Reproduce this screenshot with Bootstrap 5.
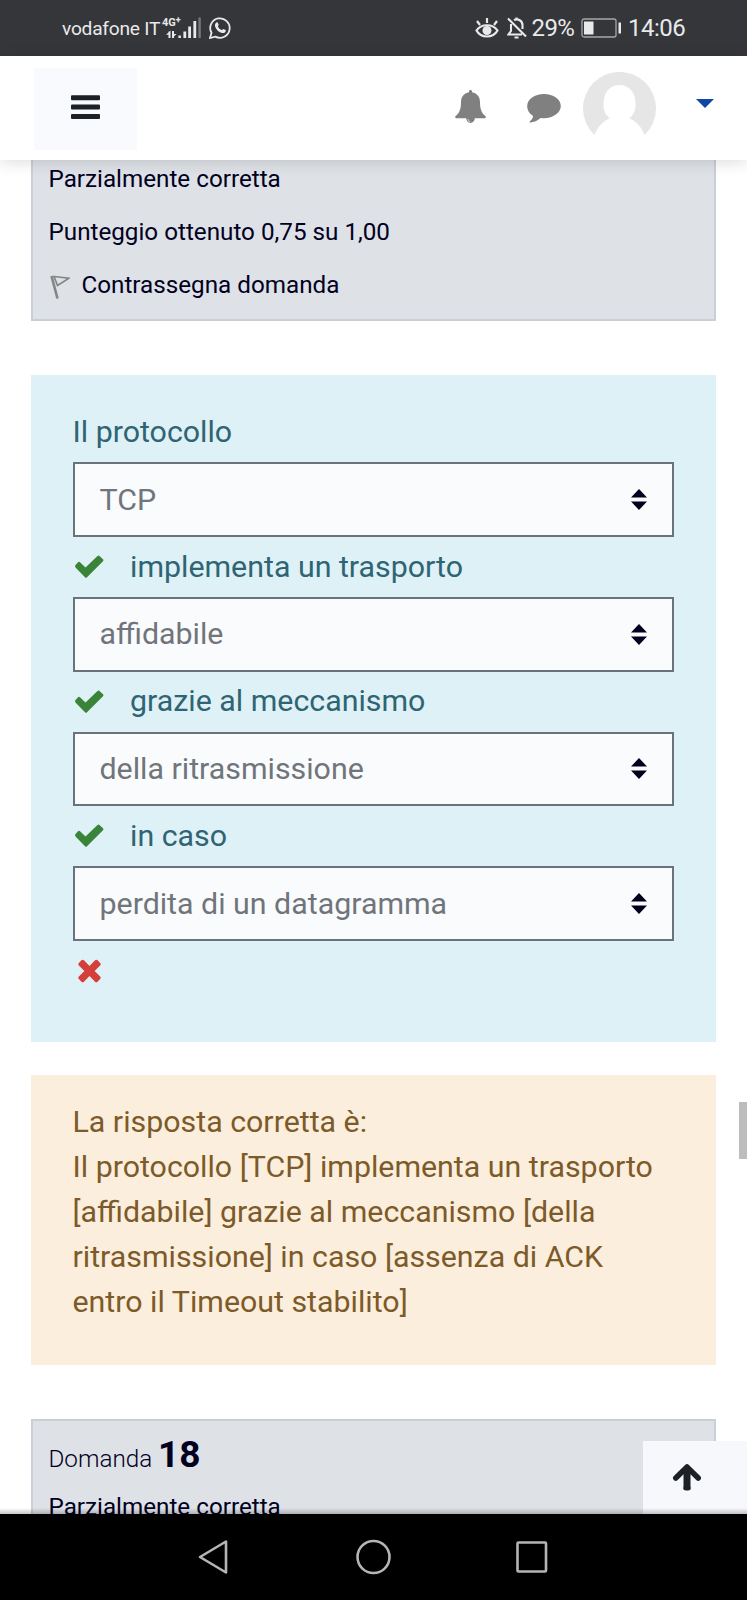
<!DOCTYPE html>
<html lang="it">
<head>
<meta charset="utf-8">
<meta name="viewport" content="width=device-width, initial-scale=1">
<title>Quiz - Domanda 17</title>
<link href="https://cdn.jsdelivr.net/npm/bootstrap@5.3.0/dist/css/bootstrap.min.css" rel="stylesheet">
<style>
body{font-family:Roboto,"Liberation Sans",sans-serif;font-size:30.35px;line-height:45px;color:#01001e}
svg{display:block;flex:none}
.screen{height:1600px;overflow:hidden}
.statusbar{height:56px;background:#35363a;color:#e9e9ea;padding:0 62px 0 62px;line-height:56px}
.carrier{font-size:19.2px;letter-spacing:-.25px;width:98px;white-space:nowrap;padding-top:1px}
.netcol{width:41px;height:28px}
.net-type{font:bold 11px/11px Roboto,sans-serif;left:2px;top:3px;white-space:nowrap}
.net-type span{font-size:9px;position:relative;top:-3px}
.pct{font-size:24px;width:49px;letter-spacing:-.6px}
.clock{font-size:24px;width:57px;letter-spacing:-.5px;white-space:nowrap}
.topbar{height:104px;background:#fff;box-shadow:0 3px 14px rgba(0,0,0,.13);z-index:2;padding:11.5px 33px 0 34px}
.menu-btn{width:103px;height:82px;background:#f9fafd;border-radius:0}
.view{background:#fff}
.page{padding:0 31px}
.info-box{background:#dee1e6;border:2px solid #c9cfd6;font-size:24.22px;line-height:36px;padding:0 15.5px}
.info-top{border-top:0;height:160.5px;padding-top:.9px}
.info-top>div{height:53px}
.info-next{margin-top:54px;height:160px;padding-top:12.5px}
.qno{font-size:24.22px;font-weight:300;height:56px;line-height:44px}
.qno b{font-size:37px;font-weight:700;letter-spacing:0}
.formulation{margin-top:54.5px;height:666.5px;background:#def1f7;color:#2f6473;padding:34.5px 42px 0 41.5px}
.form-select.answer{height:74.8px;margin:7.5px 0;border:2px solid #6a737b;border-radius:0;background-color:#fafbfd;color:#6f757b;font-size:30.35px;line-height:45px;padding:12.4px 60px 13px 25px;opacity:1;
background-image:url("data:image/svg+xml,%3Csvg xmlns='http://www.w3.org/2000/svg' viewBox='0 0 16 21'%3E%3Cpath fill='%2301001e' d='M0 8.5 8 0l8 8.5zM0 12.5h16L8 21z'/%3E%3C/svg%3E");background-size:16px 21px;background-position:right 25px center}
.step{height:45px;line-height:44.6px}
.step svg{margin-right:25.5px}
.outcome{margin-top:33.5px;height:289.5px;background:#fbeedc;color:#7d5a29;padding:24px 40px 0 41.5px}
.to-top{right:0;bottom:0;width:104px;height:73px;background:#f7f8fc}
.thumb{right:0;top:942px;width:8px;height:57px;background:#bdbdbd}
.navshade{left:0;right:0;bottom:0;height:6px;background:linear-gradient(transparent,rgba(0,0,0,.22))}
.sysnav{height:86px;background:#000}
</style>
</head>
<body>
<div class="screen d-flex flex-column">
  <div class="statusbar d-flex align-items-center flex-shrink-0">
    <span class="carrier">vodafone IT</span>
    <span class="netcol position-relative">
      <span class="net-type position-absolute">4G<span>+</span></span>
      <svg width="41" height="28" viewBox="0 0 41 28" fill="#e9e9ea"><path d="M8.500 17.500h2V24h-2zM6 20.700 10.500 16.500v4.200zM12 17h2v7h-2zM12 24.300v-4.200h4.500zM18.400 21.500h2.500V24h-2.500zM23.400 17.500h2.800V24h-2.800zM28.200 12.500H31V24h-2.800zM33.400 7h2.800v17h-2.800z"/><path fill="#77787b" d="M38.400 3.500h2.400V24h-2.400z"/></svg>
    </span>
    <svg style="margin-left:7.500px" width="22" height="22" viewBox="0 0 22 22" fill="none" stroke="#e9e9ea" stroke-width="1.800"><path d="M1 21l1.500-5.200A9.700 9.700 0 1 1 6.400 19.600z"/><path fill="#e9e9ea" stroke="none" d="M7.300 5.600c.8-.5 1.300-.4 1.600.3l.8 1.800c.1.500-1 1.300-.8 1.700.9 1.800 2.100 3 3.900 3.700.5.100 1.200-1.300 1.700-1.100l2 .9c.6.300.4.900.1 1.500-.6 1.300-2.200 2-3.700 1.500-3.700-1.200-5.800-3.500-6.800-6.500-.4-1.500 0-3 1.200-3.800z"/></svg>
    <svg class="ms-auto" width="24" height="22" viewBox="0 0 24 22" fill="none" stroke="#e9e9ea" stroke-width="2.200"><path d="M1.500 13.500C6 6.500 18 6.500 22.500 13.500 18 21.500 6 21.500 1.500 13.500zM12 1v5M2 4 5 8M22 4 19 8"/><circle cx="12" cy="13.500" r="4.500" fill="#e9e9ea" stroke="none"/></svg>
    <svg style="margin:0 5px 0 8px" width="20" height="22" viewBox="0 0 20 22" fill="none" stroke="#e9e9ea" stroke-width="2.100"><path d="M4 7v7L1.500 17.500H15M7 3.200C11 1 15.500 4 15.500 8v4M1 1.500l18 18"/><path d="M7.500 20.500h4M9.500 .5v2"/></svg>
    <span class="pct">29%</span>
    <svg width="40" height="20" viewBox="0 0 40 20" fill="none" stroke="#a7a8aa" stroke-width="1.300"><rect x="1" y="1" width="34" height="18" rx="2"/><path fill="#e9e9ea" stroke="none" d="M3 3.500h9.500v13H3zM37.500 4.500H40v11h-2.500z"/></svg>
    <span class="clock" style="margin-left:7.500px">14:06</span>
  </div>

  <header class="topbar d-flex flex-shrink-0 position-relative">
    <button class="menu-btn btn p-0 border-0 d-flex justify-content-center" aria-label="Menu">
      <svg style="margin-top:27px" width="29" height="25" viewBox="0 0 29 25" fill="#1d2025"><rect y=".3" width="29" height="5" rx="1"/><rect y="9.600" width="29" height="5" rx="1"/><rect y="18.900" width="29" height="5" rx="1"/></svg>
    </button>
    <svg class="ms-auto" style="margin-top:22px" width="31" height="34" viewBox="0 0 31 34"><path fill="#808080" d="M15.500 0c1 0 1.700.8 1.500 2.200 5.300 1 8 4.800 8 9.800 0 7 1.500 11 5.600 14.300.6.900 0 2-1 2H19.800a4.300 4.700 0 0 1-8.600 0H1.400c-1 0-1.600-1.100-1-2C4.500 23 6 19 6 12c0-5 2.700-8.800 8-9.800C13.800.8 14.500 0 15.500 0z"/><path d="M12.800 29a2.700 2.700 0 0 0 2.500 2.600" fill="none" stroke="#ddd" stroke-width=".8"/></svg>
    <svg style="margin:26.500px 22.500px 0 40.500px" width="34" height="29" viewBox="0 0 34 29"><path fill="#808080" d="M17 0c9.400 0 16.800 5.300 16.800 12S26.400 24.200 17 24.200c-1.200 0-2.300-.1-3.400-.3C10.600 26.500 7 28.200 3.300 28.500c-.8 0-.9-.8-.4-1.300 2-1.700 2.800-3 3.200-5.300C2.500 19.700.2 16.200.2 12 .2 5.300 7.600 0 17 0z"/></svg>
    <svg style="margin-top:4px" width="73" height="66" viewBox="0 0 73 66"><path fill="#e6e6e6" d="M11.500 63A36.500 36.500 0 1 1 61.500 63C58.500 55 53.500 49.500 46.500 46.500A16.500 18 0 0 0 52.500 31C52.500 20.500 46 13 36.500 13S20.500 20.500 20.500 31a16.500 18 0 0 0 6 15.500C19.500 49.500 14.500 55 11.500 63z"/></svg>
    <svg style="margin:31px 0 0 40px" width="18" height="9" viewBox="0 0 18 9"><path fill="#0f47a6" d="M0 0h18L9 9z"/></svg>
  </header>

  <main class="view flex-fill position-relative overflow-hidden">
    <div class="page">
      <section class="info-box info-top">
        <div>Parzialmente corretta</div>
        <div>Punteggio ottenuto 0,75 su 1,00</div>
        <div class="d-flex"><svg style="margin:8px 12px 0 1px" width="20" height="24" viewBox="0 0 20 24" fill="none" stroke="#858585"><path stroke-width="2.600" d="M1.500 1 7.500 23.500"/><path stroke-width="1.700" d="M4 1.500 19 3.200 7.500 10.500z"/></svg>Contrassegna domanda</div>
      </section>

      <section class="formulation">
        <div class="step">Il protocollo</div>
        <select class="form-select answer" disabled><option>TCP</option></select>
        <div class="step d-flex align-items-center"><svg width="32" height="24" viewBox="0 0 32 24"><path fill="#398439" d="M2.500 10 5 7.300q1-1 2 0l5.500 5.200L24.500 1q1-1 2 0l3.500 3.300q1 1 0 2L14 22.300q-1 1-2 0L2.500 12.500q-1-1.200 0-2.500z"/></svg>implementa un trasporto</div>
        <select class="form-select answer" disabled><option>affidabile</option></select>
        <div class="step d-flex align-items-center"><svg width="32" height="24" viewBox="0 0 32 24"><path fill="#398439" d="M2.500 10 5 7.300q1-1 2 0l5.500 5.200L24.500 1q1-1 2 0l3.500 3.300q1 1 0 2L14 22.300q-1 1-2 0L2.500 12.500q-1-1.200 0-2.500z"/></svg>grazie al meccanismo</div>
        <select class="form-select answer" disabled><option>della ritrasmissione</option></select>
        <div class="step d-flex align-items-center"><svg width="32" height="24" viewBox="0 0 32 24"><path fill="#398439" d="M2.500 10 5 7.300q1-1 2 0l5.500 5.200L24.500 1q1-1 2 0l3.500 3.300q1 1 0 2L14 22.300q-1 1-2 0L2.500 12.500q-1-1.200 0-2.500z"/></svg>in caso</div>
        <select class="form-select answer" disabled><option>perdita di un datagramma</option></select>
        <div class="step d-flex align-items-center"><svg width="32" height="24" viewBox="0 0 32 24"><path fill="#d43f3a" transform="translate(16.500 12) scale(.0188) translate(-704 -960)" d="M1298 1322q0 40-28 68l-136 136q-28 28-68 28t-68-28l-294-294-294 294q-28 28-68 28t-68-28l-136-136q-28-28-28-68t28-68l294-294-294-294q-28-28-28-68t28-68l136-136q28-28 68-28t68 28l294 294 294-294q28-28 68-28t68 28l136 136q28 28 28 68t-28 68l-294 294 294 294q28 28 28 68z"/></svg></div>
      </section>

      <section class="outcome">La risposta corretta è:<br>Il protocollo [TCP] implementa un trasporto [affidabile] grazie al meccanismo [della ritrasmissione] in caso [assenza di ACK entro il Timeout stabilito]</section>

      <section class="info-box info-next">
        <div class="qno">Domanda <b>18</b></div>
        <div>Parzialmente corretta</div>
      </section>
    </div>
    <a class="to-top position-absolute" href="#" aria-label="Torna su"><svg style="margin:22px 0 0 29px" width="30" height="28" viewBox="0 0 30 28" fill="none" stroke="#1d2025" stroke-linecap="round" stroke-linejoin="round"><path stroke-width="5.500" d="M3.800 15 15 4 26.200 15"/><path stroke-width="7" stroke-linecap="butt" d="M15 5v21.500"/><path stroke-width="5" d="M14 25h2"/></svg></a>
    <div class="thumb position-absolute"></div>
    <div class="navshade position-absolute"></div>
  </main>

  <nav class="sysnav d-flex flex-shrink-0 justify-content-center" aria-label="Sistema">
    <svg style="margin-top:24px" width="351" height="38" viewBox="0 0 351 38" fill="none" stroke="#b5b5b5" stroke-width="2.600" stroke-linejoin="round"><path d="M2 19 28 3.500v31z"/><circle cx="175.500" cy="19" r="16"/><rect x="319.500" y="4.500" width="28.500" height="29" rx="1"/></svg>
  </nav>
</div>
<script src="https://cdn.jsdelivr.net/npm/bootstrap@5.3.0/dist/js/bootstrap.bundle.min.js"></script>
</body>
</html>
